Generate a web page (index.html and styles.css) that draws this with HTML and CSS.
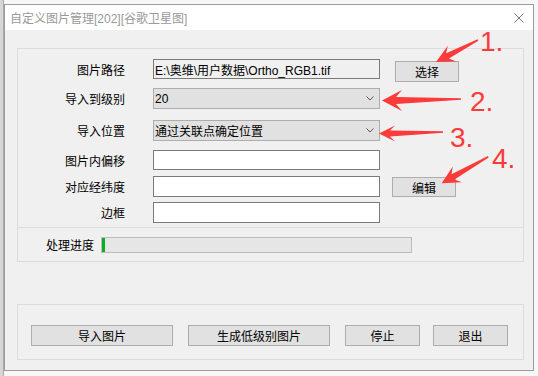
FILE: index.html
```html
<!DOCTYPE html>
<html lang="zh-CN">
<head>
<meta charset="UTF-8">
<title>自定义图片管理</title>
<link rel="stylesheet" href="styles.css">
</head>
<body>
<div class="desk">
  <div class="dialog">
    <div class="titlebar">
      <span class="title">自定义图片管理[202][谷歌卫星图]</span>
      <svg class="close" width="10" height="10" viewBox="0 0 10 10"><path d="M0.5 0.5L9.5 9.5M9.5 0.5L0.5 9.5" stroke="#777" stroke-width="1" fill="none"/></svg>
    </div>

    <div class="client">
      <!-- settings -->
      <div class="group fields">
        <div class="row r1">
          <span class="lbl">图片路径</span>
          <div class="field readonly">E:\奥维\用户数据\Ortho_RGB1.tif</div>
          <button type="button" class="btn pick">选择</button>
        </div>
        <div class="row r2">
          <span class="lbl">导入到级别</span>
          <div class="field combo">
            <span>20</span>
            <svg width="8" height="5" viewBox="0 0 8 5"><polyline points="0.5,0.5 4,4 7.5,0.5" fill="none" stroke="#555" stroke-width="1"/></svg>
          </div>
        </div>
        <div class="row r3">
          <span class="lbl">导入位置</span>
          <div class="field combo">
            <span>通过关联点确定位置</span>
            <svg width="8" height="5" viewBox="0 0 8 5"><polyline points="0.5,0.5 4,4 7.5,0.5" fill="none" stroke="#555" stroke-width="1"/></svg>
          </div>
        </div>
        <div class="row r4">
          <span class="lbl">图片内偏移</span>
          <div class="field"></div>
        </div>
        <div class="row r5">
          <span class="lbl">对应经纬度</span>
          <div class="field"></div>
          <button type="button" class="btn edit">编辑</button>
        </div>
        <div class="row r6">
          <span class="lbl">边框</span>
          <div class="field"></div>
        </div>
      </div>

      <div class="group progress">
        <span class="plbl">处理进度</span>
        <div class="bar"><div class="fill"></div></div>
      </div>

      <div class="group actions">
        <button type="button" class="btn wide">导入图片</button>
        <button type="button" class="btn wide b2">生成低级别图片</button>
        <button type="button" class="btn small b3">停止</button>
        <button type="button" class="btn small b4">退出</button>
      </div>
    </div>
  </div>

  <!-- red annotation arrows -->
  <svg class="marks" width="538" height="376" viewBox="0 0 538 376">
    <g fill="#fb3a3a">
      <polygon points="436,62 447.8,45.7 446.1,53.3 477.6,39.3 478.4,40.7 448.9,58.6 456.1,61.6"/>
      <polygon points="382,100.5 402,90 396,97 461,98.2 461,99.8 396,104 402,111"/>
      <polygon points="379,133.5 395,125.5 390,130.5 443,131.3 443,132.7 390,136.5 395,141.5"/>
      <polygon points="441.7,183.3 452.8,166.6 451.5,174.3 487.9,156 488.7,157.4 454.5,179.5 461.8,182.2"/>
    </g>
    <g class="num">
      <text x="480" y="50.5">1.</text>
      <text x="470" y="110.5">2.</text>
      <text x="450" y="147">3.</text>
      <text x="492" y="168">4.</text>
    </g>
  </svg>
</div>
</body>
</html>
```

FILE: styles.css
```css
* {
  box-sizing: border-box;
}

body {
  margin: 0;
  background: #fff;
  font-family: "Liberation Sans", "Noto Sans CJK SC", sans-serif;
  font-size: 12px;
  color: #000;
}

.desk {
  position: relative;
  width: 538px;
  height: 376px;
  padding: 4px 0 0 4px;
  background: linear-gradient(to right, #d6d6d6 0 3px, #a9a9a9 3px 4px, #f7f7f7 4px);
}

.dialog {
  width: 530px;
  height: 367px;
  border: 1px solid #9c9c9c;
  background: #f0f0f0;
}

.titlebar {
  height: 25px;
  background: #fff;
  display: flex;
  align-items: center;
  justify-content: space-between;
  padding: 0 9px 0 5px;
}

.title {
  color: #999;
}

.client {
  padding: 18px 9px 0 12px;
}

.group {
  border: 1px solid #dcdcdc;
}

.fields {
  height: 180px;
  padding-top: 10px;
}

.row {
  display: flex;
  align-items: center;
  height: 20px;
}
.r2, .r3, .r5, .r6 { height: 21px; }
.r2 { margin-top: 9px; }
.r3 { margin-top: 11px; }
.r4 { margin-top: 9px; }
.r5 { margin-top: 6px; }
.r6 { margin-top: 5px; }

.lbl {
  width: 107px;
  margin-right: 28px;
  text-align: right;
}

.field {
  width: 227px;
  height: 100%;
  border: 1px solid #7a7a7a;
  background: #fff;
  padding-left: 1px;
  display: flex;
  align-items: center;
  white-space: nowrap;
  overflow: hidden;
}

.readonly {
  background: #f0f0f0;
}

.combo {
  background: #e1e1e1;
  border-color: #adadad;
  justify-content: space-between;
  padding-right: 5px;
}

.btn {
  font-family: inherit;
  font-size: 12px;
  color: #000;
  background: #e1e1e1;
  border: 1px solid #adadad;
  padding: 0;
  height: 21px;
  margin: 0;
}

.pick {
  width: 64px;
  margin-left: 15px;
  align-self: flex-start;
  margin-top: 2px;
}

.edit {
  width: 64px;
  height: 20px;
  margin-left: 12px;
  align-self: flex-end;
}

.progress {
  border-top: 0;
  height: 34px;
  display: flex;
  align-items: center;
  padding-left: 28px;
}

.plbl {
  width: 48px;
  margin-right: 7px;
}

.bar {
  width: 311px;
  height: 16px;
  border: 1px solid #bcbcbc;
  background: #e6e6e6;
}

.fill {
  width: 3px;
  height: 100%;
  background: #06b025;
}

.actions {
  margin-top: 42px;
  height: 56px;
  padding: 20px 0 0 13px;
  display: flex;
  align-items: flex-start;
}

.wide { width: 142px; }
.small { width: 75px; }
.b2 { margin-left: 15px; }
.b3 { margin-left: 15px; }
.b4 { margin-left: 13px; }

.marks {
  position: absolute;
  left: 0;
  top: 0;
  pointer-events: none;
}

.num text {
  font-family: "Liberation Sans", sans-serif;
  font-size: 28px;
  fill: #fb3a3a;
}
```
